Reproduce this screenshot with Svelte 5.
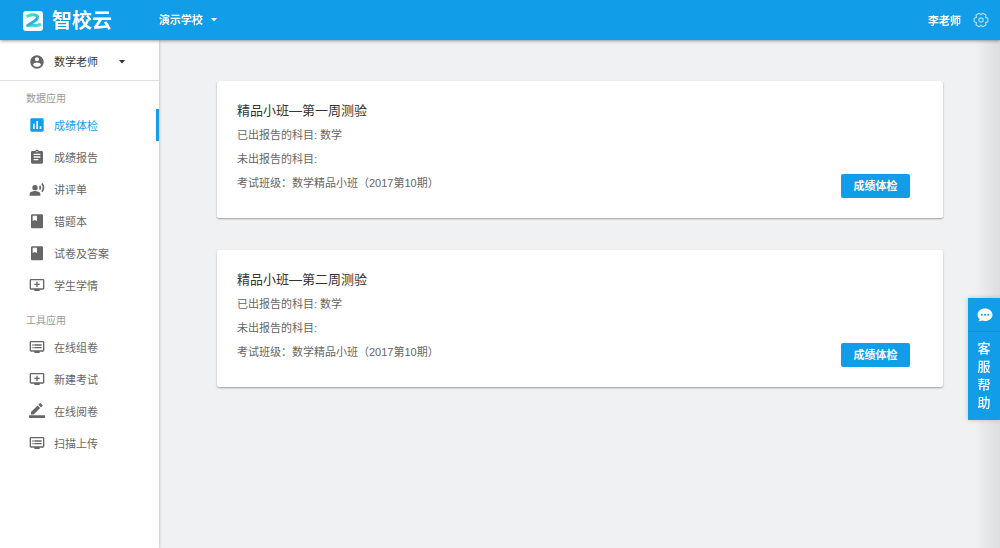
<script lang="ts">
  interface Item {
    label: string;
    icon: string;
  }

  const icons: Record<string, string> = {
    account:
      'M12 2C6.48 2 2 6.48 2 12s4.48 10 10 10 10-4.48 10-10S17.52 2 12 2zm0 3c1.66 0 3 1.34 3 3s-1.34 3-3 3-3-1.34-3-3 1.34-3 3-3zm0 14.2c-2.5 0-4.71-1.28-6-3.22.03-1.99 4-3.08 6-3.08 1.99 0 5.97 1.09 6 3.08-1.29 1.94-3.5 3.22-6 3.22z',
    chart:
      'M20 2H4c-1.1 0-2 .9-2 2v16c0 1.1.9 2 2 2h16c1.1 0 2-.9 2-2V4c0-1.1-.9-2-2-2zM8.5 18H6v-8h2.500v8zm5 0H11V6h2.500v12zm5 0H16v-4h2.500v4z',
    clipboard:
      'M19 3h-4.180C14.400 1.840 13.300 1 12 1s-2.400.84-2.820 2H5c-1.100 0-2 .9-2 2v15c0 1.100.9 2 2 2h14c1.100 0 2-.9 2-2V5c0-1.100-.9-2-2-2zm-7 0c.55 0 1 .45 1 1s-.45 1-1 1-1-.45-1-1 .45-1 1-1zm2 14H7v-2h7v2zm3-4H7v-2h10v2zm0-4H7V7h10v2z',
    voice:
      'M9 6a4 4 0 1 0 0 8 4 4 0 0 0 0-8zM9 15c-2.670 0-8 1.340-8 4v3h16v-3c0-2.660-5.330-4-8-4zM16.760 6.360l-1.680 1.690c.84 1.180.84 2.710 0 3.890l1.680 1.690c2.020-2.020 2.020-5.070 0-7.270zM20.070 3l-1.630 1.630c2.770 3.020 2.770 7.560 0 10.740L20.070 17c3.900-3.890 3.910-9.950 0-14z',
    book:
      'M19 2H5c-1.100 0-2 .9-2 2v17c0 1.100.9 2 2 2h14c1.100 0 2-.9 2-2V4c0-1.100-.9-2-2-2zM5.500 4H12v8l-3.250-1.500L5.500 12V4z',
    addScreen:
      'M21 3H3c-1.110 0-2 .89-2 2v12c0 1.100.89 2 2 2h5v2h8v-2h5c1.100 0 1.990-.9 1.990-2L23 5c0-1.110-.9-2-2-2zm0 14H3V5h18v12zm-5-7v2h-3v3h-2v-3H8v-2h3V7h2v3h3z',
    listScreen:
      'M21 3H3c-1.100 0-2 .9-2 2v12c0 1.100.9 2 2 2h5v2h8v-2h5c1.100 0 1.990-.9 1.990-2L23 5c0-1.100-.9-2-2-2zm0 14H3V5h18v12zm-2-9H8v2h11V8zm0 4H8v2h11v-2zM7 8H5v2h2V8zm0 4H5v2h2v-2z',
    pencil:
      'M16.700 7.600L12.900 3.800 3 13.500V17.300h3.900l9.800-9.700zM20.200 4.400c.4-.4.4-1 0-1.400L17.600.5c-.4-.4-1-.4-1.400 0L14 2.700l3.900 3.900 2.300-2.200zM0 18.500h24v4H0z',
  };

  const sections: { title: string; items: Item[] }[] = [
    {
      title: '数据应用',
      items: [
        { label: '成绩体检', icon: 'chart' },
        { label: '成绩报告', icon: 'clipboard' },
        { label: '讲评单', icon: 'voice' },
        { label: '错题本', icon: 'book' },
        { label: '试卷及答案', icon: 'book' },
        { label: '学生学情', icon: 'addScreen' },
      ],
    },
    {
      title: '工具应用',
      items: [
        { label: '在线组卷', icon: 'listScreen' },
        { label: '新建考试', icon: 'addScreen' },
        { label: '在线阅卷', icon: 'pencil' },
        { label: '扫描上传', icon: 'listScreen' },
      ],
    },
  ];

  const exams = [
    { title: '精品小班—第一周测验', done: '数学', pending: '', group: '数学精品小班（2017第10期）' },
    { title: '精品小班—第二周测验', done: '数学', pending: '', group: '数学精品小班（2017第10期）' },
  ];

  let active = $state('成绩体检');
  let school = $state('演示学校');
  let role = $state('数学老师');

  function select(e: MouseEvent, label: string) {
    e.preventDefault();
    active = label;
  }
</script>

{#snippet icon(name: string)}
  <svg class="icon" viewBox="0 0 24 24" aria-hidden="true"><path d={icons[name]} /></svg>
{/snippet}

{#snippet caret()}
  <svg class="caret" viewBox="0 0 6 4" aria-hidden="true"><path d="M0 0h6L3 3.500z" /></svg>
{/snippet}

<div class="page">
  <header class="topbar">
    <a class="brand" href="#home">
      <svg class="logo" viewBox="0 0 20 20" aria-hidden="true">
        <defs>
          <linearGradient id="ribbon" x1="0" y1="0" x2="1" y2="1">
            <stop offset="0" stop-color="#5ce6b8" />
            <stop offset="0.5" stop-color="#2fc0d0" />
            <stop offset="1" stop-color="#4fe0d0" />
          </linearGradient>
        </defs>
        <rect width="20" height="20" rx="3" fill="#f4fdff" />
        <path
          d="M3.500 5.500C7 3 13.500 3 14.500 5.500C15.500 9 9 11.500 4.500 14.500C9 13.500 13 15.500 18 13.500"
          fill="none"
          stroke="url(#ribbon)"
          stroke-width="3"
          stroke-linejoin="round"
        />
        <path d="M14.500 7.500C12 10.500 8 11.500 5 14.500" fill="none" stroke="#35a8e0" stroke-width="2" />
      </svg>
      <span>智校云</span>
    </a>
    <div class="dropdown">
      <select aria-label="学校" bind:value={school}>
        <option>演示学校</option>
      </select>
      {@render caret()}
    </div>
    <span class="user">李老师</span>
    <button class="settings" aria-label="设置">
      <svg viewBox="0 0 16 16" aria-hidden="true">
        <path d="M14.800 6.300v3.400l-2.300.9.400 2.400-3 1.700L8 13.200l-1.900 1.500-3-1.700.4-2.400-2.300-.9V6.300l2.300-.9L3.100 3l3-1.700L8 2.800l1.900-1.500 3 1.700-.4 2.400z" />
        <circle cx="8" cy="8" r="2.200" />
      </svg>
    </button>
  </header>

  <div class="body">
    <aside class="sidebar">
      <div class="role">
        {@render icon('account')}
        <div class="dropdown">
          <select aria-label="角色" bind:value={role}>
            <option>数学老师</option>
          </select>
          {@render caret()}
        </div>
      </div>
      <nav>
        {#each sections as section}
          <div class="section">
            <h2>{section.title}</h2>
            {#each section.items as item}
              <a
                class="item"
                class:active={active === item.label}
                href="#{item.label}"
                onclick={(e) => select(e, item.label)}
              >
                {@render icon(item.icon)}
                {item.label}
              </a>
            {/each}
          </div>
        {/each}
      </nav>
    </aside>

    <main>
      {#each exams as exam}
        <article class="card">
          <div class="info">
            <h3>{exam.title}</h3>
            <p>已出报告的科目: {exam.done}</p>
            <p>未出报告的科目: {exam.pending}</p>
            <p>考试班级：{exam.group}</p>
          </div>
          <button class="btn">成绩体检</button>
        </article>
      {/each}
    </main>
  </div>

  <div class="edge"></div>
  <button class="help">
    <span class="help-icon">
      <svg viewBox="0 0 16 16" aria-hidden="true">
        <path d="M8 1.500c4 0 7.500 2.700 7.500 6.200S12 14 8 14c-1 0-2-.2-2.900-.5-1 .6-2.300.9-3.600.8.700-.7 1.100-1.500 1.100-2.400C1.300 10.800.5 9.300.5 7.700.5 4.200 4 1.500 8 1.500z" fill="#fff" />
        <g fill="#129de8">
          <circle cx="4.800" cy="7.700" r="1" />
          <circle cx="8" cy="7.700" r="1" />
          <circle cx="11.200" cy="7.700" r="1" />
        </g>
      </svg>
    </span>
    <span class="help-text">客服帮助</span>
  </button>
</div>

<style>
  :global(body) { margin: 0; background: #f0f1f3; }

  .page {
    --blue: #129de8;
    min-height: 100vh;
    display: flex;
    flex-direction: column;
    font-family: "Liberation Sans", "Noto Sans CJK SC", sans-serif;
    font-size: 11px;
    color: #666;
  }
  .page :is(button, select) { font: inherit; color: inherit; border: 0; padding: 0; background: none; cursor: pointer; }
  a { color: inherit; text-decoration: none; }

  /* ── Top bar ── */
  .topbar {
    position: relative;
    z-index: 1;
    display: flex;
    align-items: center;
    height: 40px;
    padding-right: 11px;
    background: var(--blue);
    color: #fff;
    font-weight: 700;
    box-shadow: 0 1px 3px rgba(0, 0, 0, 0.4);
  }
  .brand {
    display: flex;
    align-items: center;
    gap: 9px;
    width: 159px;
    padding: 1px 0 0 23px;
    box-sizing: border-box;
    font-size: 20px;
    line-height: 24px;
  }
  .logo { width: 20px; height: 20px; }

  .dropdown { display: flex; align-items: center; }
  .page .dropdown select { appearance: none; margin-right: -12px; padding-right: 20px; }
  .dropdown option { color: #333; }
  .caret { width: 6px; height: 4px; fill: currentColor; pointer-events: none; }

  .user { margin-left: auto; }
  .settings { display: flex; margin-left: 12px; }
  .settings svg { width: 16px; height: 16px; fill: none; stroke: #a9dcf8; stroke-width: 1.2; stroke-linejoin: round; }

  /* ── Sidebar ── */
  .body { flex: 1; display: flex; }
  .sidebar {
    width: 159px;
    flex-shrink: 0;
    background: #fff;
    box-shadow: 0 0 3px rgba(0, 0, 0, 0.3);
  }
  .icon { width: 16px; height: 16px; fill: currentColor; flex-shrink: 0; }
  .role {
    display: flex;
    align-items: center;
    gap: 9px;
    height: 41px;
    padding: 4px 0 0 29px;
    box-sizing: border-box;
    border-bottom: 1px solid #e0e0e0;
  }
  .role .dropdown { color: #333; }
  .page .role select { padding-right: 33px; }

  .section { padding: 8px 0 2px; }
  .section h2 { margin: 0; padding-left: 26px; font-size: 10px; line-height: 20px; font-weight: 400; color: #999; }
  .item {
    display: flex;
    align-items: center;
    gap: 9px;
    height: 32px;
    padding-left: 29px;
    border-right: 3px solid transparent;
  }
  .item.active { color: var(--blue); border-right-color: var(--blue); }

  /* ── Exam cards ── */
  main {
    flex: 1;
    display: flex;
    flex-direction: column;
    gap: 32px;
    padding: 41px 57px 40px 58px;
  }
  .card {
    display: flex;
    align-items: flex-end;
    justify-content: space-between;
    padding: 18px 33px 20px 20px;
    background: #fff;
    border-radius: 2px;
    box-shadow: 0 1px 2px rgba(0, 0, 0, 0.35);
  }
  .info { padding-bottom: 3px; line-height: 24px; }
  .info h3 { margin: 0; font-size: 13px; font-weight: 400; color: #333; }
  .info p { margin: 0; }
  .page .btn {
    width: 69px;
    height: 24px;
    padding-bottom: 2px;
    border-radius: 2px;
    background: var(--blue);
    color: #fff;
    font-weight: 700;
  }

  /* ── Right edge ── */
  .edge {
    position: fixed;
    top: 40px;
    right: 0;
    bottom: 0;
    width: 26px;
    background: linear-gradient(to right, transparent, rgba(0, 0, 0, 0.08));
    pointer-events: none;
  }
  .page .help {
    position: fixed;
    top: 298px;
    right: 0;
    width: 32px;
    background: var(--blue);
    color: #fff;
    font-size: 13px;
    line-height: 18px;
    font-weight: 500;
    box-shadow: 0 0 5px rgba(0, 0, 0, 0.2);
  }
  .help-icon { display: flex; justify-content: center; padding: 9px 0 8px 2px; border-bottom: 1px solid #0f8fd6; }
  .help-icon svg { width: 16px; height: 16px; }
  .help-text { display: block; width: 13px; margin: 0 auto; padding: 8px 0; word-break: break-all; }
</style>
